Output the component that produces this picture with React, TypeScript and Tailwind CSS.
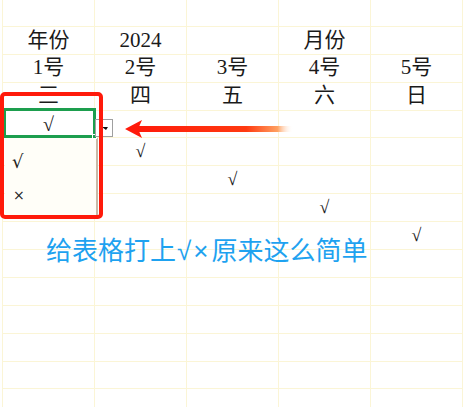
import { JSX } from "react";

const rows: string[][] = [
  ["", "", "", "", ""],
  ["年份", "2024", "", "月份", ""],
  ["1号", "2号", "3号", "4号", "5号"],
  ["三", "四", "五", "六", "日"],
  ["√", "", "", "", ""],
  ["", "√", "", "", ""],
  ["", "", "√", "", ""],
  ["", "", "", "√", ""],
  ["", "", "", "", "√"],
  ["", "", "", "", ""],
  ["", "", "", "", ""],
  ["", "", "", "", ""],
  ["", "", "", "", ""],
  ["", "", "", "", ""],
  ["", "", "", "", ""],
];

export default function App(): JSX.Element {
  return (
    <div className="relative w-[464px] h-[407px] overflow-hidden bg-white">
      {/* Sheet grid */}
      <div
        className="-mt-px ml-[2px] grid grid-cols-[repeat(5,92px)] auto-rows-[27.9px] border-l border-[#fbf5d6] text-[#1a1a1a]"
        style={{ fontFamily: '"Liberation Serif", "Noto Sans CJK SC", serif' }}
      >
        {rows.map((row, r) =>
          row.map((cell, c) => (
            <div
              key={`${r}-${c}`}
              className={`flex items-center justify-center border-r border-b border-[#fbf5d6] ${
                cell === "√" ? (r === 4 ? "text-[20px]" : "text-[18px]") : "text-[21px]"
              }`}
            >
              {cell}
            </div>
          ))
        )}
      </div>

      {/* Dropdown list */}
      <div
        className="absolute left-[5px] top-[138px] w-[93px] h-[78px] bg-[#fffef8] border-r-2 border-[#c9b9a6] flex flex-col pl-[7px] text-[#222]"
        style={{ fontFamily: '"DejaVu Sans", "Noto Sans CJK SC", sans-serif' }}
      >
        <div className="h-[40px] flex items-center text-[18px] pt-[6px]">√</div>
        <div className="h-[34px] flex items-center text-[14px] pl-[1px]">×</div>
      </div>

      {/* Green selected cell */}
      <div className="absolute left-[3px] top-[108px] w-[93px] h-[30px] border-[3px] border-[#1d9e4e]"></div>
      <div className="absolute left-[92px] top-[134px] w-[5px] h-[5px] bg-[#1d9e4e] border border-white"></div>

      {/* Dropdown button */}
      <div className="absolute left-[95px] top-[119px] w-[18px] h-[18px] bg-white border border-[#a0a0a0]">
        <svg width="16" height="16" viewBox="0 0 16 16" className="block">
          <polygon points="6,7 12,7 10,10" fill="#111" />
        </svg>
      </div>

      {/* Red highlight frame */}
      <div className="absolute left-0 top-[92px] w-[103px] h-[127px] border-[4px] border-[#ff1a0a] rounded-[5px]"></div>

      {/* Red arrow */}
      <svg className="absolute left-[123px] top-[118px]" width="172" height="22" viewBox="0 0 172 22">
        <defs>
          <linearGradient id="shaft" x1="0" y1="0" x2="1" y2="0">
            <stop offset="0" stopColor="#ff1a0a" />
            <stop offset="0.7" stopColor="#ff3a10" />
            <stop offset="0.9" stopColor="#ffa060" />
            <stop offset="1" stopColor="#ffffff" stopOpacity="0" />
          </linearGradient>
        </defs>
        <rect x="14" y="8" width="156" height="6" fill="url(#shaft)" />
        <polygon points="2,11 19,2 15,11 19,20" fill="#ff1a0a" />
      </svg>

      {/* Caption */}
      <div
        className="absolute left-[46px] top-[236px] text-[26px] leading-none text-[#1ea2f0] whitespace-nowrap"
        style={{ fontFamily: '"Noto Sans CJK SC", sans-serif' }}
      >
        给表格打上
        <span className="px-px tracking-[2px]" style={{ fontFamily: '"Liberation Sans", sans-serif' }}>
          √×
        </span>
        原来这么简单
      </div>
    </div>
  );
}
